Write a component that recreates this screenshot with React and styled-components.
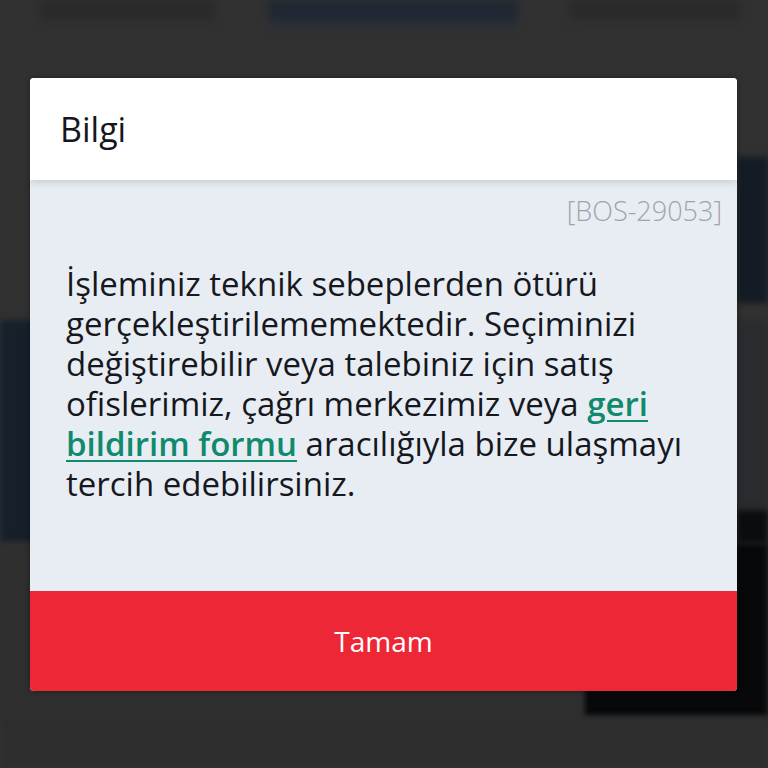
import styled, { createGlobalStyle } from 'styled-components';

const GlobalStyle = createGlobalStyle`
  html, body {
    margin: 0;
    padding: 0;
    background: #313131;
  }
  body {
    font-family: "Open Sans", "Noto Sans", "Liberation Sans", sans-serif;
    -webkit-font-smoothing: antialiased;
  }
  #root {
    height: 768px;
  }
`;

// the page behind the dimmed overlay
const Page = styled.div`
  position: relative;
  width: 768px;
  height: 768px;
  overflow: hidden;
  background: #313131;
`;

const TabRow = styled.div`
  display: flex;
  justify-content: space-between;
  padding: 0 28px 0 40px;
  height: 40px;
  filter: blur(4px);
`;

const Tab = styled.div`
  width: ${p => p.w}px;
  height: 20px;
  background: ${p => (p.active ? '#1f2833' : '#2a2a2a')};
  box-shadow: ${p => (p.active ? '0 12px 0 -3px #2a2f36' : 'none')};
`;

const PageBody = styled.div`
  display: grid;
  grid-template-columns: 1fr 154px 31px;
  grid-template-rows: 117px 146px 17px 190px 33px 174px 51px;
`;

const Block = styled.div`
  grid-column: ${p => p.col};
  grid-row: ${p => p.row};
  background: ${p => p.bg};
  filter: blur(3px);
`;

const Overlay = styled.div`
  position: absolute;
  inset: 0;
  display: flex;
  align-items: center;
  justify-content: center;
  padding-right: 1px;
`;

const Modal = styled.div`
  width: 707px;
  height: 613px;
  border-radius: 4px;
  overflow: hidden;
  display: flex;
  flex-direction: column;
  background: #e8edf4;
  box-shadow: 0 0 6px rgba(0, 0, 0, 0.35);
`;

const Header = styled.div`
  height: 102px;
  flex: none;
  display: flex;
  align-items: center;
  padding: 0 30px;
  background: #ffffff;
  box-shadow: 0 2px 8px rgba(0, 0, 0, 0.16);
  position: relative;
  z-index: 1;
`;

const Title = styled.h2`
  margin: 0;
  font-size: 34px;
  font-weight: 400;
  color: #15171c;
`;

const Content = styled.div`
  flex: 1;
  display: flex;
  flex-direction: column;
  padding: 12px 15px 0 36px;
`;

const Code = styled.div`
  align-self: flex-end;
  font-size: 27px;
  font-weight: 300;
  color: #a0a4aa;
`;

const Message = styled.p`
  margin: 35px 24px 0 0;
  font-size: 33px;
  line-height: 40px;
  color: #16181d;
`;

const Link = styled.a`
  color: #0f8a6c;
  font-weight: 600;
  text-decoration: underline;
  text-underline-offset: 4px;
  text-decoration-thickness: 2px;
`;

const OkButton = styled.button`
  flex: none;
  height: 100px;
  border: none;
  background: #ee2737;
  color: #ffffff;
  font-family: inherit;
  font-size: 28px;
  font-weight: 400;
  cursor: pointer;
`;

export default function App() {
  return (
    <>
      <GlobalStyle />
      <Page>
        <TabRow>
          <Tab w={175} />
          <Tab w={250} active />
          <Tab w={170} />
        </TabRow>
        <PageBody>
          <Block col="3" row="2" bg="#131b24" />
          <Block col="1 / 3" row="4 / 6" bg="#15202b" />
          <Block col="3" row="4" bg="#2a2c30" />
          <Block col="3" row="5" bg="#0b0c0e" />
          <Block col="2 / 4" row="6" bg="#07080a" />
          <Block col="1" row="6" bg="#2f2f2f" />
          <Block col="1 / 4" row="7" bg="#2e2e2e" />
        </PageBody>
        <Overlay>
          <Modal>
            <Header>
              <Title>Bilgi</Title>
            </Header>
            <Content>
              <Code>[BOS-29053]</Code>
              <Message>
                İşleminiz teknik sebeplerden ötürü gerçekleştirilememektedir.
                Seçiminizi değiştirebilir veya talebiniz için satış
                ofislerimiz, çağrı merkezimiz veya{' '}
                <Link href="#">geri bildirim formu</Link> aracılığıyla bize
                ulaşmayı tercih edebilirsiniz.
              </Message>
            </Content>
            <OkButton>Tamam</OkButton>
          </Modal>
        </Overlay>
      </Page>
    </>
  );
}
